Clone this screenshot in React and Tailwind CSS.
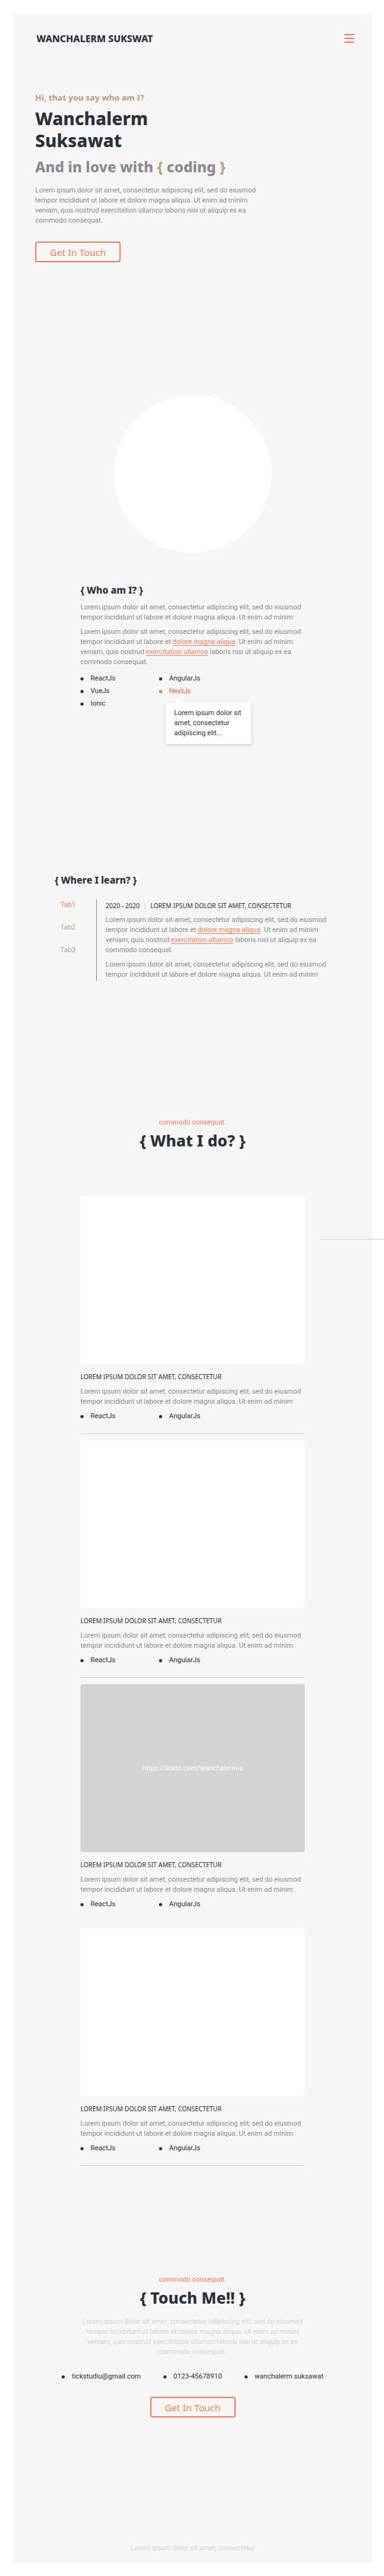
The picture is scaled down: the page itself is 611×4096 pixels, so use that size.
const LINE_1 = 'Lorem ipsum dolor sit amet, consectetur adipiscing elit, sed do eiusmod';
const LINE_2 = 'tempor incididunt ut labore et dolore magna aliqua. Ut enim ad minim';
const LINE_3 = 'veniam, quis nostrud exercitation ullamco laboris nisi ut aliquip ex ea';
const LINE_4 = 'commodo consequat.';

const projects = [
  { id: 1, divider: true },
  { id: 2, divider: true },
  { id: 3, link: 'https://linkto.com/wanchalerm-s' },
  { id: 4, divider: true },
];

const contacts = ['tickstudiu@gmail.com', '0123-45678910', 'wanchalerm suksawat'];

function Dot({ className = 'bg-[#2b303b]' }) {
  return <span className={`size-[5px] shrink-0 rounded-full ${className}`} />;
}

function Bullet({ children }) {
  return (
    <li className="flex items-center gap-[11px] leading-5">
      <Dot />
      {children}
    </li>
  );
}

function ShortText() {
  return (
    <p className="text-[#8b8b8f]">
      {LINE_1}
      <br />
      {LINE_2}
    </p>
  );
}

function LinkedText() {
  const link = 'text-[#ea7c5b] underline underline-offset-2';
  return (
    <p className="text-[#8b8b8f]">
      {LINE_1}
      <br />
      tempor incididunt ut labore et <a href="#dolore" className={link}>dolore magna aliqua</a>. Ut enim ad minim
      <br />
      veniam, quis nostrud <a href="#ullamco" className={link}>exercitation ullamco</a> laboris nisi ut aliquip ex ea
      <br />
      {LINE_4}
    </p>
  );
}

function TouchButton({ className }) {
  return (
    <button
      type="button"
      className={`h-[33px] w-[136px] rounded border-2 border-[#ea7c5b] font-['Noto_Sans',sans-serif] text-[15px] leading-5 text-[#ea7c5b] ${className}`}
    >
      Get In Touch
    </button>
  );
}

function Project({ link, divider }) {
  return (
    <article className={`border-b pb-[17px] ${divider ? 'border-[#d0d4d5]' : 'border-transparent'}`}>
      <div
        className={`flex h-[267px] items-center justify-center rounded ${link ? 'bg-[#d0d4d5]' : 'bg-white'}`}
      >
        {link && <a href={link} className="text-white">{link}</a>}
      </div>
      <h3 className="mt-3 mb-2 font-['Noto_Sans',sans-serif] text-[10px] leading-4 uppercase">
        Lorem ipsum dolor sit amet, consectetur
      </h3>
      <ShortText />
      <ul className="mt-[5px] grid grid-cols-[125px_1fr]">
        <Bullet>ReactJs</Bullet>
        <Bullet>AngularJs</Bullet>
      </ul>
    </article>
  );
}

export default function App() {
  return (
    <div className="overflow-x-hidden bg-white pt-[23px] pr-[19px] pb-[21px] pl-[21px] font-['Roboto',sans-serif] text-[11px] leading-4 whitespace-nowrap text-[#2b303b]">
      <div className="rounded bg-[#f6f6f6] pb-[15px]">
        <header className="flex items-center justify-between pt-7 pr-7 pl-[37px]">
          <a href="#top" className="font-['Noto_Sans',sans-serif] text-[15px] leading-5 font-extrabold">
            WANCHALERM SUKSWAT
          </a>
          <button type="button" aria-label="Menu" className="flex w-4 flex-col gap-1">
            <span className="h-0.5 w-full rounded-full bg-[#ea7c5b]" />
            <span className="h-0.5 w-full rounded-full bg-[#ea7c5b]" />
            <span className="h-0.5 w-full rounded-full bg-[#ea7c5b]" />
          </button>
        </header>

        <section className="mt-[76px] pl-[35px]">
          <div className="font-['Noto_Sans',sans-serif] font-extrabold">
            <p className="text-[13px] leading-4 text-[#b9a386]">Hi, that you say who am I?</p>
            <h1 className="mt-2 text-[28px] leading-[35px]">
              Wanchalerm
              <br />
              Suksawat
            </h1>
            <p className="mt-3 text-[23px] leading-6 text-[#8b8b8f]">
              And in love with <span className="text-[#b9a386]">{'{'}</span> coding{' '}
              <span className="text-[#b9a386]">{'}'}</span>
            </p>
          </div>
          <p className="mt-[18px] text-[#8b8b8f]">
            {LINE_1}
            <br />
            {LINE_2}
            <br />
            {LINE_3}
            <br />
            {LINE_4}
          </p>
          <TouchButton className="mt-[25px]" />
        </section>

        <div className="mx-auto mt-[211px] size-[251px] rounded-full bg-white" />

        <section className="mx-[107px] mt-[49px]">
          <h2 className="mb-2.5 font-['Noto_Sans',sans-serif] text-[15px] leading-5 font-extrabold">
            {'{ Who am I? }'}
          </h2>
          <ShortText />
          <div className="mt-[7px]">
            <LinkedText />
          </div>
          <ul className="mt-2 grid grid-cols-[125px_1fr]">
            <Bullet>ReactJs</Bullet>
            <Bullet>AngularJs</Bullet>
            <Bullet>VueJs</Bullet>
            <li className="relative leading-5">
              <button
                type="button"
                aria-describedby="next-tip"
                className="flex items-center gap-[11px] text-[#ea7c5b] text-shadow-[1px_1px_0_#cfcfcf]"
              >
                <Dot className="bg-[#ea7c5b] shadow-[1px_1px_0_#cfcfcf]" />
                NextJs
              </button>
              <div
                id="next-tip"
                role="tooltip"
                className="absolute top-7 left-2.5 w-[137px] rounded bg-white px-[14px] py-[9px] leading-4 shadow-[0_2px_4px_#0000002b]"
              >
                <svg viewBox="0 0 6 7" className="absolute bottom-full left-[18px] h-[7px] w-1.5" aria-hidden="true">
                  <path d="M3 0 6 7H0Z" fill="#fff" />
                </svg>
                Lorem ipsum dolor sit
                <br />
                amet, consectetur
                <br />
                adipiscing elit...
              </div>
            </li>
            <Bullet>Ionic</Bullet>
          </ul>
        </section>

        <section className="mt-[260px] pl-[66px]">
          <h2 className="font-['Noto_Sans',sans-serif] text-[15px] leading-5 font-extrabold">
            {'{ Where I learn? }'}
          </h2>
          <div className="mt-[21px] flex">
            <div role="tablist" className="flex w-[66px] flex-col items-start gap-5 pt-px pl-[9px] text-[#b9a386]">
              <button type="button" role="tab" aria-selected="true" className="text-[#ea7c5b]">Tab1</button>
              <button type="button" role="tab" aria-selected="false">Tab2</button>
              <button type="button" role="tab" aria-selected="false">Tab3</button>
            </div>
            <div role="tabpanel" className="flex flex-col gap-[7px] border-l border-[#8b8b8f] py-0.5 pl-[14px]">
              <h3 className="flex items-center gap-2 font-['Noto_Sans',sans-serif] text-[10px] leading-4 uppercase">
                2020 - 2020
                <span className="h-2.5 w-px bg-[#d0d4d5]" />
                Lorem ipsum dolor sit amet, consectetur
              </h3>
              <LinkedText />
              <ShortText />
            </div>
          </div>
        </section>

        <section className="relative mt-[217px]">
          <p className="text-center text-[#ea7c5b]">{LINE_4}</p>
          <h2 className="mt-1.5 mb-[75px] text-center font-['Noto_Sans',sans-serif] text-[25px] leading-7 font-extrabold">
            {'{ What I do? }'}
          </h2>
          <span className="absolute top-[193px] -right-[19px] h-px w-[101px] bg-[#d0d4d5]" />
          <div className="mx-[107px] flex flex-col gap-2.5">
            {projects.map((p) => (
              <Project key={p.id} link={p.link} divider={p.divider} />
            ))}
          </div>
        </section>

        <section className="mt-[173px] flex flex-col items-center text-center">
          <p className="text-[#ea7c5b]">{LINE_4}</p>
          <h2 className="mt-1.5 mb-[17px] font-['Noto_Sans',sans-serif] text-[25px] leading-7 font-extrabold">
            {'{ Touch Me!! }'}
          </h2>
          <p className="text-[#d0d4d5]">
            {LINE_1}
            <br />
            {LINE_2}
            <br />
            {LINE_3}
            <br />
            {LINE_4}
          </p>
          <ul className="mt-[21px] flex justify-center gap-9">
            {contacts.map((c) => (
              <Bullet key={c}>{c}</Bullet>
            ))}
          </ul>
          <TouchButton className="mt-[22px]" />
        </section>

        <footer className="mt-[200px] text-center text-[#d0d4d5]">Lorem ipsum dolor sit amet, consectetur</footer>
      </div>
    </div>
  );
}
